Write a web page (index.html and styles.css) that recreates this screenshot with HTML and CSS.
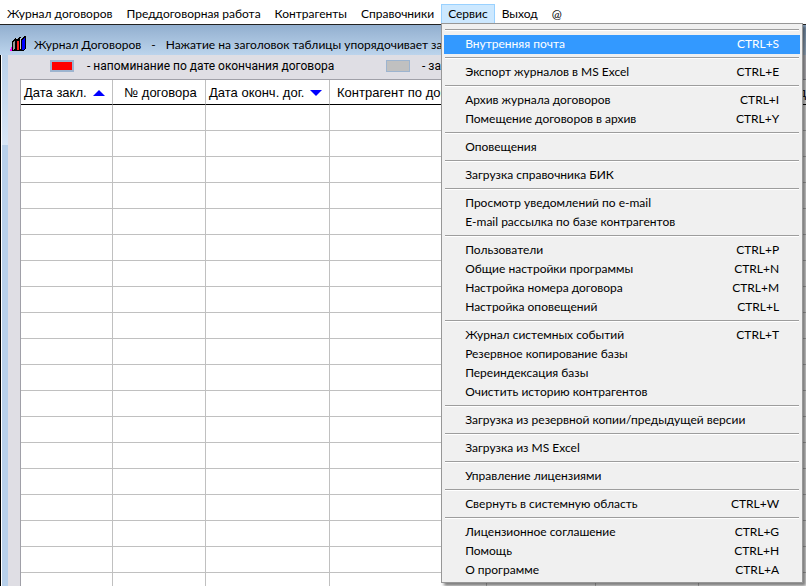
FILE: index.html
```
<!DOCTYPE html>
<html lang="ru">
<head>
  <meta charset="UTF-8">
  <meta name="viewport" content="width=device-width, initial-scale=1.0">
  <title>Журнал договоров</title>
  <link rel="stylesheet" href="styles.css">
</head>
<body>
  <nav class="menubar">
    <button class="menu-button">Журнал договоров</button>
    <button class="menu-button">Преддоговорная работа</button>
    <button class="menu-button">Контрагенты</button>
    <button class="menu-button">Справочники</button>
    <div class="menu-open">
      <button class="menu-button active">Сервис</button>
      <div class="dropdown">
        <hr>
        <button class="item selected"><span>Внутренняя почта</span><span>CTRL+S</span></button>
        <hr>
        <button class="item"><span>Экспорт журналов в MS Excel</span><span>CTRL+E</span></button>
        <hr>
        <button class="item"><span>Архив журнала договоров</span><span>CTRL+I</span></button>
        <button class="item"><span>Помещение договоров в архив</span><span>CTRL+Y</span></button>
        <hr>
        <button class="item"><span>Оповещения</span></button>
        <hr>
        <button class="item"><span>Загрузка справочника БИК</span></button>
        <hr>
        <button class="item"><span>Просмотр уведомлений по e-mail</span></button>
        <button class="item"><span>E-mail рассылка по базе контрагентов</span></button>
        <hr>
        <button class="item"><span>Пользователи</span><span>CTRL+P</span></button>
        <button class="item"><span>Общие настройки программы</span><span>CTRL+N</span></button>
        <button class="item"><span>Настройка номера договора</span><span>CTRL+M</span></button>
        <button class="item"><span>Настройка оповещений</span><span>CTRL+L</span></button>
        <hr>
        <button class="item"><span>Журнал системных событий</span><span>CTRL+T</span></button>
        <button class="item"><span>Резервное копирование базы</span></button>
        <button class="item"><span>Переиндексация базы</span></button>
        <button class="item"><span>Очистить историю контрагентов</span></button>
        <hr>
        <button class="item"><span>Загрузка из резервной копии/предыдущей версии</span></button>
        <hr>
        <button class="item"><span>Загрузка из MS Excel</span></button>
        <hr>
        <button class="item"><span>Управление лицензиями</span></button>
        <hr>
        <button class="item"><span>Свернуть в системную область</span><span>CTRL+W</span></button>
        <hr>
        <button class="item"><span>Лицензионное соглашение</span><span>CTRL+G</span></button>
        <button class="item"><span>Помощь</span><span>CTRL+H</span></button>
        <button class="item"><span>О программе</span><span>CTRL+A</span></button>
      </div>
    </div>
    <button class="menu-button">Выход</button>
    <button class="menu-button">@</button>
  </nav>

  <main class="window">
    <header class="titlebar">
      <svg class="books" width="16" height="16" viewBox="0 0 16 16" shape-rendering="crispEdges">
        <path d="M0 14L3 8V13L2 15H0z" fill="#f0f"/>
        <path d="M2 15V6L5 2H7V15z" fill="#000"/>
        <path d="M3 14V7L5 4V13z" fill="#999"/>
        <path d="M6 15V4L9 1H11V15z" fill="#000"/>
        <path d="M7 14V5H9V14z" fill="#f22"/>
        <path d="M5 3L7 1V3z M9 3L11 1V13H10V4z" fill="#ccc"/>
        <path d="M11 15V3L14 0H16V12L14 15z" fill="#000"/>
        <path d="M12 14V4L15 1V12L14 14z" fill="#00f"/>
      </svg>
      <span>Журнал Договоров</span>
      <span class="dash">-</span>
      <span>Нажатие на заголовок таблицы упорядочивает записи</span>
    </header>
    <div class="frame">
      <div class="edge"></div>
      <div class="content">
        <div class="legend">
          <span class="swatch red"></span>
          <span class="legend-text">- напоминание по дате окончания договора</span>
          <span class="swatch grey"></span>
          <span>- зав.</span>
        </div>
        <table class="journal">
          <colgroup>
            <col class="col-date">
            <col class="col-number">
            <col class="col-end">
            <col class="col-partner">
            <col class="col-sum">
            <col class="col-state">
            <col>
          </colgroup>
          <thead>
            <tr>
              <th>Дата закл.<i class="sort up"></i></th>
              <th class="center">№ договора</th>
              <th>Дата оконч. дог.<i class="sort down"></i></th>
              <th class="partner">Контрагент по договору</th>
              <th></th>
              <th></th>
              <th class="last">д</th>
            </tr>
          </thead>
          <tbody>
            <tr><td></td><td></td><td></td><td></td><td></td><td></td><td></td></tr>
            <tr><td></td><td></td><td></td><td></td><td></td><td></td><td></td></tr>
            <tr><td></td><td></td><td></td><td></td><td></td><td></td><td></td></tr>
            <tr><td></td><td></td><td></td><td></td><td></td><td></td><td></td></tr>
            <tr><td></td><td></td><td></td><td></td><td></td><td></td><td></td></tr>
            <tr><td></td><td></td><td></td><td></td><td></td><td></td><td></td></tr>
            <tr><td></td><td></td><td></td><td></td><td></td><td></td><td></td></tr>
            <tr><td></td><td></td><td></td><td></td><td></td><td></td><td></td></tr>
            <tr><td></td><td></td><td></td><td></td><td></td><td></td><td></td></tr>
            <tr><td></td><td></td><td></td><td></td><td></td><td></td><td></td></tr>
            <tr><td></td><td></td><td></td><td></td><td></td><td></td><td></td></tr>
            <tr><td></td><td></td><td></td><td></td><td></td><td></td><td></td></tr>
            <tr><td></td><td></td><td></td><td></td><td></td><td></td><td></td></tr>
            <tr><td></td><td></td><td></td><td></td><td></td><td></td><td></td></tr>
            <tr><td></td><td></td><td></td><td></td><td></td><td></td><td></td></tr>
            <tr><td></td><td></td><td></td><td></td><td></td><td></td><td></td></tr>
            <tr><td></td><td></td><td></td><td></td><td></td><td></td><td></td></tr>
            <tr><td></td><td></td><td></td><td></td><td></td><td></td><td></td></tr>
            <tr><td></td><td></td><td></td><td></td><td></td><td></td><td></td></tr>
          </tbody>
        </table>
      </div>
    </div>
  </main>
</body>
</html>
```
FILE: styles.css
```
* {
  box-sizing: border-box;
}

body {
  margin: 0;
  height: 100vh;
  display: flex;
  flex-direction: column;
  overflow: hidden;
  background: #fff;
  color: #000;
  font-family: Lato, "Open Sans", sans-serif;
  font-size: 12px;
  white-space: nowrap;
}

button {
  margin: 0;
  border: 0;
  background: none;
  color: inherit;
  font: inherit;
}

/* Menu bar */
.menubar {
  display: flex;
  flex: none;
  height: 25px;
  padding-top: 4px;
  border-bottom: 1px solid #222;
}

.menu-button {
  height: 20px;
  padding: 0 7px;
  line-height: 20px;
}

.menu-button.active {
  padding: 0 6px;
  border: 1px solid #99d1ff;
  background: #cce8ff;
  line-height: 18px;
}

.menu-open {
  position: relative;
}

/* Dropdown */
.dropdown {
  position: absolute;
  z-index: 1;
  top: 19px;
  left: 0;
  width: 362px;
  padding: 2px;
  border: 1px solid #979797;
  background: #f0f0f0;
  box-shadow: 3px 3px 3px rgba(0, 0, 0, 0.5);
}

.dropdown hr {
  height: 2px;
  margin: 3px 1px 4px;
  border: 0;
  border-top: 1px solid #9d9d9d;
  border-bottom: 1px solid #fff;
}

.item {
  display: flex;
  justify-content: space-between;
  width: 100%;
  height: 19px;
  padding: 0 21px;
  line-height: 18px;
}

.item.selected {
  background: #3399ff;
  color: #fff;
}

/* Window */
.window {
  flex: 1;
  display: flex;
  flex-direction: column;
  min-height: 0;
}

.titlebar {
  display: flex;
  flex: none;
  align-items: center;
  height: 30px;
  padding: 8px 0 0 10px;
  background: linear-gradient(#92afcf, #bcd4ec);
}

.books {
  margin-right: 8px;
}

.dash {
  margin: 0 10px;
}

.frame {
  flex: 1;
  display: flex;
  min-height: 0;
}

.edge {
  flex: none;
  width: 8px;
  border-left: 1px solid #000;
  background: linear-gradient(#bad1ea, #d8e6f5 90px, #b8d0ea 90px);
  box-shadow: inset 1px 0 #fff;
}

.content {
  flex: 1;
  min-width: 0;
  padding-left: 12px;
  background: #dfdee4;
  font-family: "Liberation Sans", Arial, sans-serif;
  font-size: 13px;
}

.legend {
  display: flex;
  align-items: center;
  height: 24px;
  padding: 0 0 2px 30px;
  font-family: Roboto, Arial, sans-serif;
  font-size: 12px;
}

.swatch {
  width: 24px;
  height: 12px;
  border: 1px solid #9db4cf;
}

.red {
  margin-right: 13px;
  border-width: 2px;
  background: #f00;
}

.grey {
  margin-right: 12px;
  background: #c0c0c0;
}

.legend-text {
  width: 299px;
}

/* Table */
.journal {
  width: 100%;
  table-layout: fixed;
  border-collapse: separate;
  border-spacing: 0;
  border-top: 1px solid #a0a0a8;
  border-left: 1px solid #a0a0a8;
  background: #fff;
}

.col-date { width: 92px; }
.col-number { width: 93px; }
.col-end { width: 124px; }
.col-partner { width: 157px; }
.col-sum { width: 109px; }
.col-state { width: 103px; }

th {
  height: 25px;
  padding: 0 0 0 3px;
  overflow: hidden;
  border-right: 1px solid #c0c0c0;
  border-bottom: 1px solid #000;
  font-weight: normal;
  text-align: left;
}

th.center {
  text-align: center;
}

th.partner {
  padding-left: 7px;
}

th.last {
  border-right: 0;
  text-align: right;
}

td {
  height: 26px;
  padding: 0;
  border-right: 1px solid #c0c0c0;
  border-bottom: 1px solid #c0c0c0;
}

td:last-child {
  border-right: 0;
}

.sort {
  display: inline-block;
  margin-left: 6px;
  border: 6px solid transparent;
  vertical-align: 1px;
}

.up {
  border-top: 0;
  border-bottom-color: #00f;
}

.down {
  border-bottom: 0;
  border-top-color: #00f;
}
```
